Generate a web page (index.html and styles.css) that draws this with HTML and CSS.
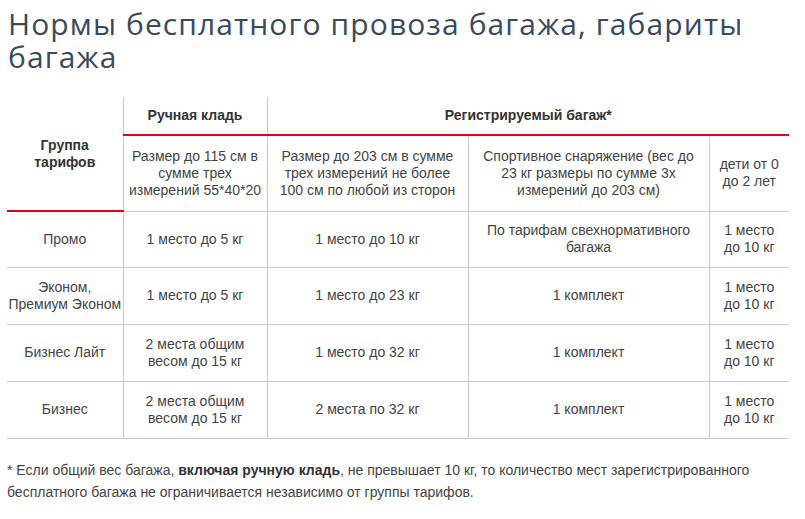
FILE: index.html
```html
<!DOCTYPE html>
<html lang="ru">
<head>
<meta charset="utf-8">
<title>Нормы бесплатного провоза багажа</title>
<link rel="stylesheet" href="styles.css">
</head>
<body>
<h1 class="title">Нормы бесплатного провоза багажа, габариты багажа</h1>
<table class="bag">
  <colgroup>
    <col class="c1"><col class="c2"><col class="c3"><col class="c4"><col class="c5">
  </colgroup>
  <thead>
    <tr class="h1">
      <th rowspan="2" class="grp red">Группа<br>тарифов</th>
      <th class="red">Ручная кладь</th>
      <th colspan="3" class="red">Регистрируемый багаж*</th>
    </tr>
    <tr class="h2">
      <td class="tight">Размер до 115 см в сумме трех измерений 55*40*20</td>
      <td class="tight">Размер до 203 см в сумме трех измерений не более 100 см по любой из сторон</td>
      <td>Спортивное снаряжение (вес до 23 кг размеры по сумме 3х измерений до 203 см)</td>
      <td>дети от 0 до 2 лет</td>
    </tr>
  </thead>
  <tbody>
    <tr class="first">
      <td>Промо</td>
      <td>1 место до 5 кг</td>
      <td>1 место до 10 кг</td>
      <td>По тарифам свехнормативного багажа</td>
      <td>1 место до 10 кг</td>
    </tr>
    <tr>
      <td>Эконом, Премиум Эконом</td>
      <td>1 место до 5 кг</td>
      <td>1 место до 23 кг</td>
      <td>1 комплект</td>
      <td>1 место до 10 кг</td>
    </tr>
    <tr>
      <td>Бизнес Лайт</td>
      <td>2 места общим весом до 15 кг</td>
      <td>1 место до 32 кг</td>
      <td>1 комплект</td>
      <td>1 место до 10 кг</td>
    </tr>
    <tr>
      <td>Бизнес</td>
      <td>2 места общим весом до 15 кг</td>
      <td>2 места по 32 кг</td>
      <td>1 комплект</td>
      <td>1 место до 10 кг</td>
    </tr>
  </tbody>
</table>
<p class="note">* Если общий вес багажа, <b>включая ручную кладь</b>, не превышает 10 кг, то количество мест зарегистрированного бесплатного багажа не ограничивается независимо от группы тарифов.</p>
</body>
</html>
```
FILE: styles.css
```css
html, body {
  margin: 0;
  padding: 0;
  background: #fff;
}
body {
  padding: 7px 7px 0 7px;
  font-family: "Liberation Sans", Arial, sans-serif;
  color: #444;
}
.title {
  margin: 0 0 24px 1px;
  font-family: "Open Sans", sans-serif;
  font-weight: 400;
  font-size: 30px;
  letter-spacing: 1.1px;
  line-height: 33px;
  color: #3b4a5b;
}
.bag {
  width: 782px;
  table-layout: fixed;
  border-collapse: collapse;
  font-size: 14px;
  line-height: 17px;
}
.c1 { width: 116px; }
.c2 { width: 144px; }
.c3 { width: 201px; }
.c4 { width: 241px; }
.c5 { width: 80px; }
.bag th, .bag td {
  padding: 0 8px;
  text-align: center;
  vertical-align: middle;
  border-bottom: 1px solid #ccc;
  border-left: 1px solid #ccc;
}
.bag tr > :first-child { border-left: none; }
.bag .h2 > :first-child { border-left: 1px solid #ccc; }
.bag .h2 > td.tight { padding: 0 5px; }
.bag tbody td:first-child,
.bag th.grp { padding: 0; }
.bag th {
  font-weight: 700;
  color: #333;
}
.bag th.red { border-bottom: 2px solid #e2001a; }
.h1 { height: 38px; }
.h2 { height: 76px; }
.bag tbody tr { height: 57px; }
.bag tbody tr.first { height: 56px; }
.note {
  margin: 20px 0 0 0;
  font-size: 14px;
  line-height: 22px;
  color: #444;
}
.note b { color: #333; }
```
